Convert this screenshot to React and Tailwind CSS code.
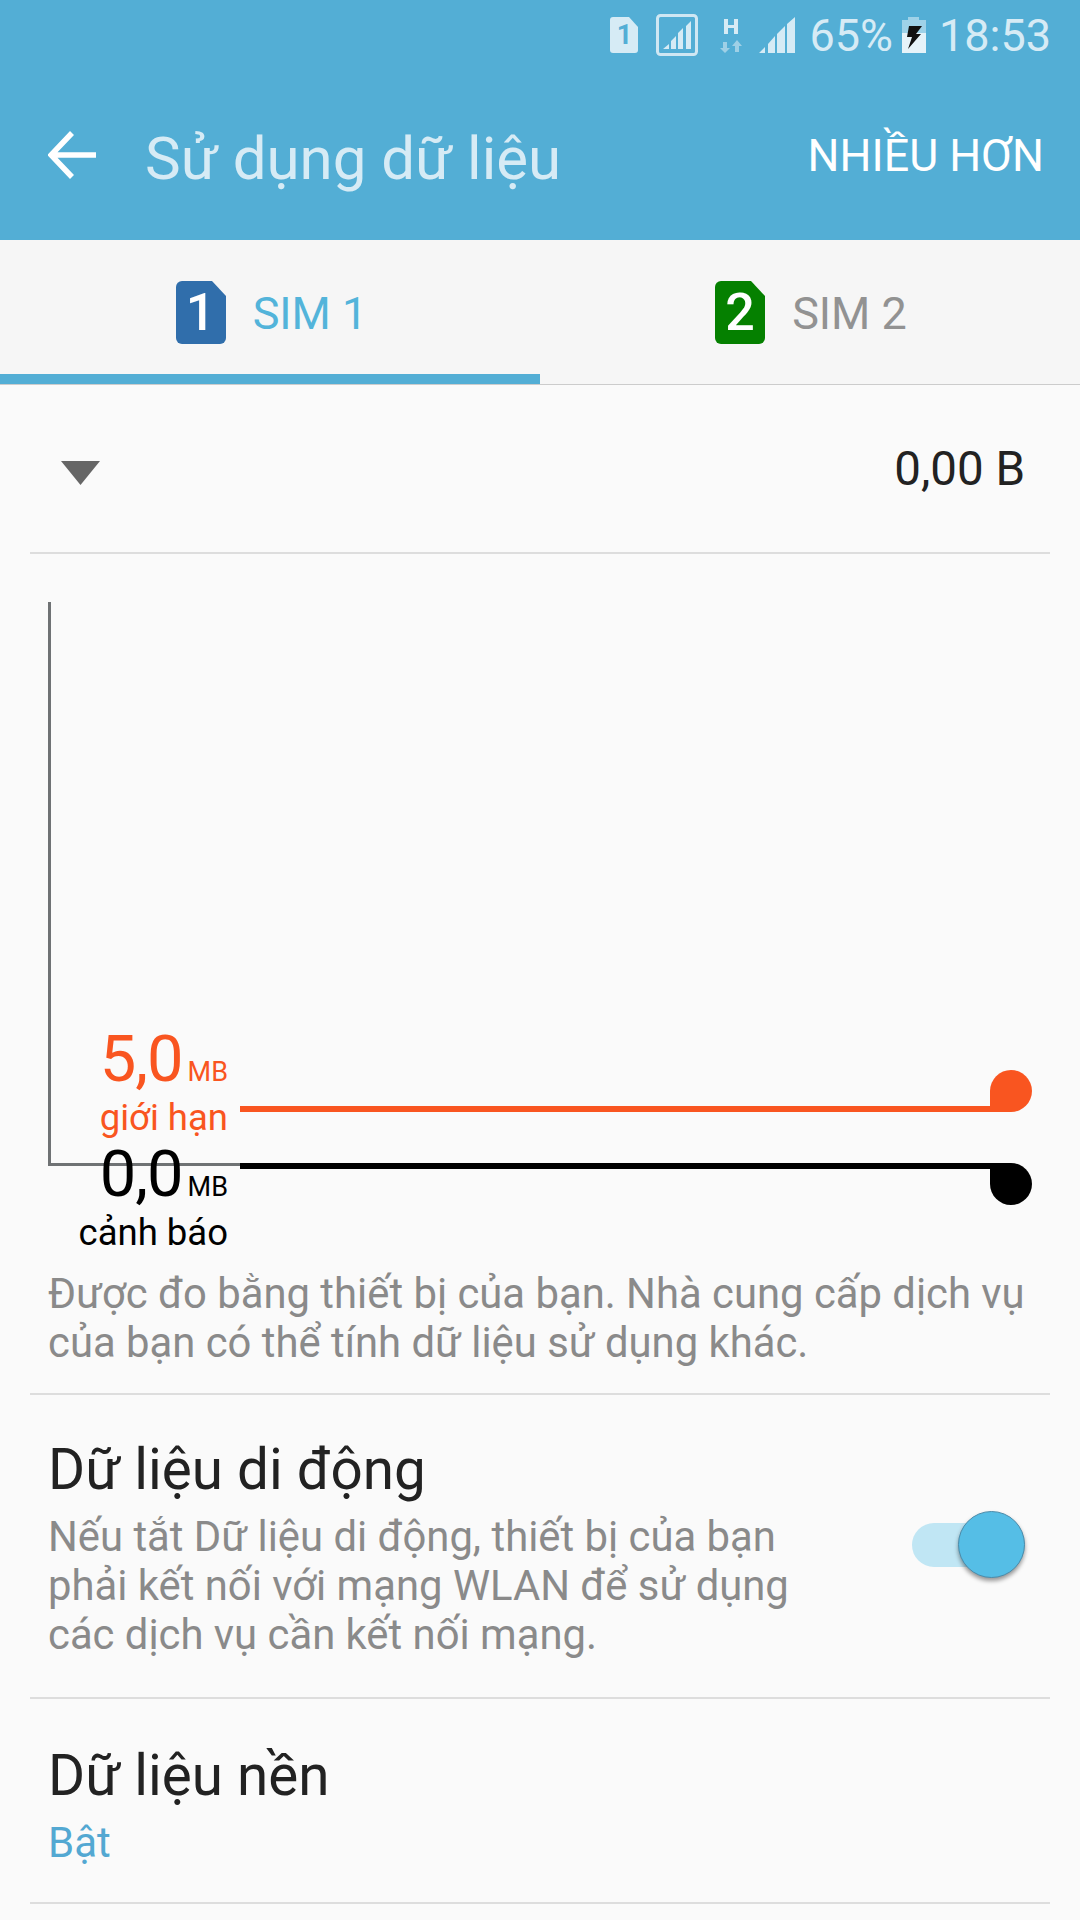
import React from "react";

const SimTab = ({ color, number, label, labelClass }) => (
  <div className="flex items-center gap-[27px]">
    <div className="relative w-[50px] h-[63px] flex items-center justify-center">
      <svg width="50" height="63" viewBox="0 0 50 63" className="absolute inset-0">
        <path d="M6 0H36L50 15V57a6 6 0 0 1-6 6H6a6 6 0 0 1-6-6V6a6 6 0 0 1 6-6Z" fill={color} />
      </svg>
      <span className="relative text-[52px] leading-none font-medium text-white">{number}</span>
    </div>
    <span className={`pt-[2px] text-[45px] leading-none ${labelClass}`}>{label}</span>
  </div>
);

const Divider = () => <div className="h-[2px] mx-[30px] bg-[#dddddd]" />;

const StatusBar = () => (
  <div className="h-[70px] flex items-center justify-end pr-[29px] text-[#d6ebf5] text-[45px]">
    {/* sim 1 */}
    <div className="relative w-[28px] h-[36px] flex items-center justify-center">
      <svg width="28" height="36" viewBox="0 0 28 36" className="absolute inset-0">
        <path d="M3 0H19L28 10V33a3 3 0 0 1-3 3H3a3 3 0 0 1-3-3V3a3 3 0 0 1 3-3Z" fill="#d6ebf5" />
      </svg>
      <span className="relative text-[27px] leading-none font-bold text-[#53aed5]">1</span>
    </div>
    {/* signal in box */}
    <svg width="42" height="42" viewBox="0 0 42 42" className="ml-[18px]">
      <rect x="1.5" y="1.5" width="39" height="39" rx="3" fill="none" stroke="#cfe7f3" strokeWidth="3" />
      <path d="M7 35L13 30V35ZM15 35V27L20 22V35ZM22 35V19L27 14V35ZM30 35V12L35 7V35Z" fill="#d6ebf5" />
    </svg>
    {/* network type */}
    <svg width="22" height="36" viewBox="0 0 22 36" className="ml-[22px]">
      <path d="M4 2H8V8H14V2H18V17H14V11H8V17H4Z" fill="#d6ebf5" />
      <path d="M3 25H7V31H10L5 36L0 31H3Z" fill="#9fd0e6" />
      <path d="M15 35V29H12L17 23L22 29H19V35Z" fill="#9fd0e6" />
    </svg>
    {/* signal */}
    <svg width="36" height="36" viewBox="0 0 36 36" className="ml-[17px]">
      <path d="M0 36L6 30V36ZM9 36V27L16 19V36ZM18 36V17L26 9V36ZM28 36V7L36 0V36Z" fill="#d6ebf5" />
    </svg>
    <span className="ml-[14px] leading-none">65%</span>
    {/* battery */}
    <svg width="24" height="36" viewBox="0 0 24 36" className="ml-[9px]">
      <path d="M6 0H17V3H24V16H0V3H6Z" fill="#9fd2e8" />
      <rect x="0" y="16" width="24" height="20" fill="#e6f3f9" />
      <path d="M7 9H20L14 17H19L6 32L10 20H5Z" fill="#111111" />
    </svg>
    <span className="ml-[13px] leading-none">18:53</span>
  </div>
);

const AppBar = () => (
  <div className="flex-1 flex items-center">
    <svg width="48" height="48" viewBox="0 0 48 48" className="ml-[48px]">
      <path d="M24 2L3 24L24 46M3 24H48" fill="none" stroke="#ffffff" strokeWidth="5.5" />
    </svg>
    <h1 className="ml-[49px] mt-[7px] text-[60px] leading-none text-[#d6ebf5]">Sử dụng dữ liệu</h1>
    <span className="ml-auto mr-[36px] mt-[3px] text-[44.8px] leading-none text-white">NHIỀU HƠN</span>
  </div>
);

const Marker = ({ value, label }) => (
  <div className="flex flex-col items-end w-[228px]">
    <div className="flex items-baseline h-[70px]">
      <span className="text-[65px] leading-[70px] tracking-[-1px]">{value}</span>
      <span className="ml-[5px] text-[27px] leading-none">MB</span>
    </div>
    <span className="text-[36.5px] leading-[47px]">{label}</span>
  </div>
);

export default function App() {
  return (
    <div className="w-[1080px] h-[1920px] overflow-hidden bg-[#fafafa] flex flex-col font-['Roboto',sans-serif]">
      <header className="h-[240px] bg-[#53aed5] flex flex-col">
        <StatusBar />
        <AppBar />
      </header>

      {/* tabs */}
      <div className="h-[145px] bg-[#f6f6f6] border-b border-[#cccccc]">
        <div className="h-[134px] grid grid-cols-2">
          <div className="flex items-center justify-center pt-[11px] pl-[3px]">
            <SimTab color="#306eab" number="1" label="SIM 1" labelClass="text-[#53b4da]" />
          </div>
          <div className="flex items-center justify-center pt-[11px] pl-[2px]">
            <SimTab color="#058000" number="2" label="SIM 2" labelClass="text-[#929292]" />
          </div>
        </div>
        <div className="h-[10px] w-[540px] bg-[#53aed5]" />
      </div>

      {/* total */}
      <div className="h-[167px] flex items-center justify-between pl-[61px] pr-[55px]">
        <svg width="39" height="24" viewBox="0 0 39 24" className="mt-[8px]">
          <path d="M0 0H39L19.5 24Z" fill="#666666" />
        </svg>
        <span className="pt-[2px] text-[47.5px] leading-none text-[#222222]">0,00 B</span>
      </div>
      <Divider />

      {/* chart */}
      <div className="relative h-[715px] shrink-0">
        <div className="absolute left-[48px] top-[48px] w-[192px] h-[564px] border-l-[3px] border-b-[3px] border-[#6f7274]" />

        <div className="absolute left-0 top-[470px] text-[#f95520]">
          <Marker value="5,0" label="giới hạn" />
        </div>
        <div className="absolute left-[240px] top-[552px] w-[750px] h-[6px] bg-[#f95520]" />
        <div className="absolute left-[990px] top-[516px] w-[42px] h-[42px] bg-[#f95520] rounded-full rounded-bl-none" />

        <div className="absolute left-0 top-[585px] text-black">
          <Marker value="0,0" label="cảnh báo" />
        </div>
        <div className="absolute left-[240px] top-[609px] w-[750px] h-[6px] bg-black" />
        <div className="absolute left-[990px] top-[609px] w-[42px] h-[42px] bg-black rounded-full rounded-tl-none" />
      </div>

      <p className="pl-[48px] pr-[40px] text-[41.8px] leading-[49px] text-[#8a8a8a] h-[124px] shrink-0">
        Được đo bằng thiết bị của bạn. Nhà cung cấp dịch vụ của bạn có thể tính dữ liệu sử dụng khác.
      </p>
      <Divider />

      {/* mobile data */}
      <div className="h-[302px] shrink-0 flex items-center pl-[48px] pr-[55px]">
        <div className="w-[780px] pt-[6px]">
          <div className="text-[56.6px] leading-[60px] text-[#222222]">Dữ liệu di động</div>
          <p className="mt-[12px] text-[41.8px] leading-[49px] text-[#8a8a8a]">
            Nếu tắt Dữ liệu di động, thiết bị của bạn phải kết nối với mạng WLAN để sử dụng các dịch vụ cần kết nối mạng.
          </p>
        </div>
        <div className="relative ml-auto mb-[3px] w-[113px] h-[44px] rounded-full bg-[#c0e6f4]">
          <div className="absolute right-0 top-[-12px] w-[67px] h-[67px] rounded-full bg-[#55bee6] border border-[#4b8cab] shadow-[0_3px_4px_rgba(0,0,0,0.4)]" />
        </div>
      </div>
      <Divider />

      {/* background data */}
      <div className="h-[203px] shrink-0 flex flex-col justify-center pl-[48px] pt-[12px]">
        <div className="text-[56.6px] leading-[60px] text-[#222222]">Dữ liệu nền</div>
        <div className="mt-[12px] text-[42px] leading-[49px] text-[#53a8d2]">Bật</div>
      </div>
      <Divider />
    </div>
  );
}
